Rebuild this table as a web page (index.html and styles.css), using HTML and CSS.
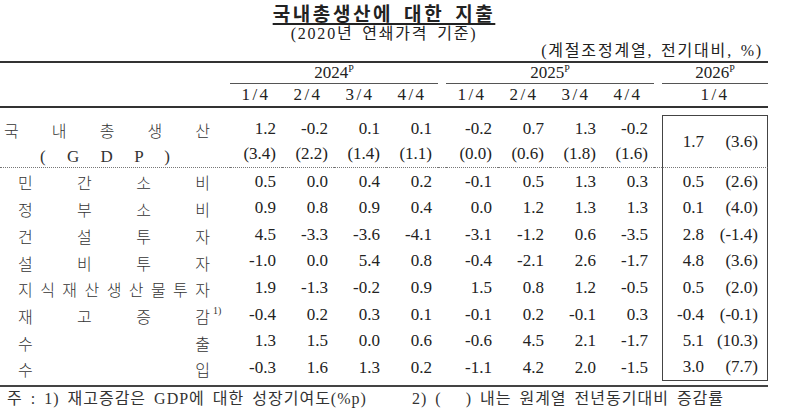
FILE: index.html
```html
<!DOCTYPE html>
<html lang="ko">
<head>
<meta charset="UTF-8">
<title>국내총생산에 대한 지출</title>
<link rel="stylesheet" href="styles.css">
</head>
<body>
<div class="page">
	<div class="title"><span>국내총생산에 대한 지출</span></div>
	<div class="sub">(2020년 연쇄가격 기준)</div>
	<div class="unit">(계절조정계열, 전기대비, %)</div>

	<table class="gdp">
		<colgroup>
			<col class="c-label">
			<col class="c-num"><col class="c-num"><col class="c-num"><col class="c-num">
			<col class="c-gap">
			<col class="c-num"><col class="c-num"><col class="c-num"><col class="c-num">
			<col class="c-gap">
			<col class="c-last1"><col class="c-last2">
		</colgroup>
		<thead>
			<tr class="years">
				<th></th>
				<th colspan="4" class="yr">2024<sup>P</sup></th>
				<th></th>
				<th colspan="4" class="yr">2025<sup>P</sup></th>
				<th></th>
				<th colspan="2" class="yr">2026<sup>P</sup></th>
			</tr>
			<tr class="qtrs">
				<th></th>
				<th>1/4</th><th>2/4</th><th>3/4</th><th>4/4</th>
				<th></th>
				<th>1/4</th><th>2/4</th><th>3/4</th><th>4/4</th>
				<th></th>
				<th colspan="2">1/4</th>
			</tr>
		</thead>
		<tbody>
			<tr class="gap-top"><td colspan="13"></td></tr>
			<tr class="gdp-a">
				<td class="label"><span class="lab lab-wide">국 내 총 생 산</span></td>
				<td>1.2</td><td>-0.2</td><td>0.1</td><td>0.1</td><td></td>
				<td>-0.2</td><td>0.7</td><td>1.3</td><td>-0.2</td><td></td>
				<td rowspan="2" class="bx-l bx-top dot">1.7</td><td rowspan="2" class="bx-r bx-top dot">(3.6)</td>
			</tr>
			<tr class="gdp-b dot-row">
				<td class="label"><span class="lab lab-gdp">( G D P )</span></td>
				<td>(3.4)</td><td>(2.2)</td><td>(1.4)</td><td>(1.1)</td><td></td>
				<td>(0.0)</td><td>(0.6)</td><td>(1.8)</td><td>(1.6)</td><td></td>
			</tr>
			<tr class="first">
				<td class="label"><span class="lab">민 간 소 비</span></td>
				<td>0.5</td><td>0.0</td><td>0.4</td><td>0.2</td><td></td>
				<td>-0.1</td><td>0.5</td><td>1.3</td><td>0.3</td><td></td>
				<td class="bx-l">0.5</td><td class="bx-r">(2.6)</td>
			</tr>
			<tr>
				<td class="label"><span class="lab">정 부 소 비</span></td>
				<td>0.9</td><td>0.8</td><td>0.9</td><td>0.4</td><td></td>
				<td>0.0</td><td>1.2</td><td>1.3</td><td>1.3</td><td></td>
				<td class="bx-l">0.1</td><td class="bx-r">(4.0)</td>
			</tr>
			<tr>
				<td class="label"><span class="lab">건 설 투 자</span></td>
				<td>4.5</td><td>-3.3</td><td>-3.6</td><td>-4.1</td><td></td>
				<td>-3.1</td><td>-1.2</td><td>0.6</td><td>-3.5</td><td></td>
				<td class="bx-l">2.8</td><td class="bx-r">(-1.4)</td>
			</tr>
			<tr>
				<td class="label"><span class="lab">설 비 투 자</span></td>
				<td>-1.0</td><td>0.0</td><td>5.4</td><td>0.8</td><td></td>
				<td>-0.4</td><td>-2.1</td><td>2.6</td><td>-1.7</td><td></td>
				<td class="bx-l">4.8</td><td class="bx-r">(3.6)</td>
			</tr>
			<tr>
				<td class="label"><span class="lab">지 식 재 산 생 산 물 투 자</span></td>
				<td>1.9</td><td>-1.3</td><td>-0.2</td><td>0.9</td><td></td>
				<td>1.5</td><td>0.8</td><td>1.2</td><td>-0.5</td><td></td>
				<td class="bx-l">0.5</td><td class="bx-r">(2.0)</td>
			</tr>
			<tr>
				<td class="label"><span class="lab">재 고 증 감</span><sup class="note">1)</sup></td>
				<td>-0.4</td><td>0.2</td><td>0.3</td><td>0.1</td><td></td>
				<td>-0.1</td><td>0.2</td><td>-0.1</td><td>0.3</td><td></td>
				<td class="bx-l">-0.4</td><td class="bx-r">(-0.1)</td>
			</tr>
			<tr>
				<td class="label"><span class="lab">수 출</span></td>
				<td>1.3</td><td>1.5</td><td>0.0</td><td>0.6</td><td></td>
				<td>-0.6</td><td>4.5</td><td>2.1</td><td>-1.7</td><td></td>
				<td class="bx-l">5.1</td><td class="bx-r">(10.3)</td>
			</tr>
			<tr class="last">
				<td class="label"><span class="lab">수 입</span></td>
				<td>-0.3</td><td>1.6</td><td>1.3</td><td>0.2</td><td></td>
				<td>-1.1</td><td>4.2</td><td>2.0</td><td>-1.5</td><td></td>
				<td class="bx-l bx-bot">3.0</td><td class="bx-r bx-bot">(7.7)</td>
			</tr>
			<tr class="gap-bot"><td colspan="13"></td></tr>
		</tbody>
	</table>

	<div class="foot">
		<span class="foot-1">주 : 1) 재고증감은 GDP에 대한 성장기여도(%p)</span>
		<span class="foot-2">2) (&nbsp;&nbsp;&nbsp;) 내는 원계열 전년동기대비 증감률</span>
	</div>
</div>
</body>
</html>
```

FILE: styles.css
```css
*{
	padding: 0;
	margin: 0;
	box-sizing: border-box;
}
body{
	font-family: "Liberation Serif", "Noto Sans CJK KR", serif;
	color: #222;
	background: #fff;
}
.page{
	width: 768px;
}

.title{
	text-align: center;
	height: 25px;
	font-family: "Noto Sans CJK KR", sans-serif;
	font-weight: 700;
	font-size: 19px;
	line-height: 25px;
}
.title span{
	letter-spacing: 2.6px;
	word-spacing: 3px;
	text-decoration: underline;
	text-decoration-thickness: 2px;
	text-underline-offset: 2px;
}
.sub{
	text-align: center;
	font-size: 16px;
	line-height: 17px;
	letter-spacing: 1.8px;
	word-spacing: 3px;
	height: 17px;
}
.unit{
	text-align: right;
	font-size: 16px;
	line-height: 18px;
	height: 18px;
	letter-spacing: 1.8px;
	word-spacing: 2px;
	padding-right: 5px;
}

.gdp{
	width: 768px;
	border-collapse: separate;
	border-spacing: 0;
	table-layout: fixed;
	border-top: 2px solid #333;
	border-bottom: 2px solid #444;
	font-size: 17px;
	margin-top: 1px;
}
.c-label{ width: 230px; }
.c-num{ width: 52px; }
.c-gap{ width: 8px; }
.c-last1{ width: 48px; }
.c-last2{ width: 58px; }

.gdp th{
	font-weight: normal;
	text-align: center;
	padding: 0;
}
.gdp .years th{
	height: 21px;
	line-height: 20px;
}
.gdp .years th.yr{
	border-bottom: 1px solid #555;
}
.gdp sup{
	font-size: 10px;
	vertical-align: 6px;
	line-height: 0;
}
.gdp .qtrs th{
	height: 23px;
	line-height: 22px;
	letter-spacing: 2.5px;
	border-bottom: 2px solid #333;
}

.gdp td{
	text-align: right;
	padding: 0 6px 0 0;
	height: 26.2px;
	white-space: nowrap;
}
.gdp .gap-top td{ height: 7px; }
.gdp .gap-bot td{ height: 4px; }
.gdp .gdp-a td{ height: 27px; padding-top: 1px; }
.gdp .gdp-b td{ height: 22px; }
.gdp .first td{ height: 27px; padding-top: 1px; }
.gdp .last td{ height: 24.5px; }
.gdp .dot-row td, .gdp td.dot{
	border-bottom: 1px dotted #777;
}

.gdp td.label{
	text-align: left;
	padding: 0;
	font-family: "Noto Sans CJK KR", sans-serif;
	font-weight: 300;
	font-size: 16px;
	color: #333;
}
.lab{
	display: inline-block;
	width: 192px;
	margin-left: 18px;
	text-align: justify;
	text-align-last: justify;
	vertical-align: middle;
}
.lab-wide{
	width: 206px;
	margin-left: 4px;
}
.lab-gdp{
	width: 130px;
	margin-left: 40px;
	font-family: "Liberation Serif", serif;
	font-size: 17px;
}
.note{
	font-family: "Liberation Serif", serif;
	font-size: 11px;
	vertical-align: 6px;
	margin-left: 3px;
}

.gdp td.bx-l{
	border-left: 1.5px solid #444;
	padding-right: 6px;
}
.gdp td.bx-r{
	border-right: 1.5px solid #444;
	padding-right: 9px;
}
.gdp td.bx-top{ border-top: 1.5px solid #444; }
.gdp td.bx-bot{ border-bottom: 1.5px solid #444; }

.foot{
	display: flex;
	font-size: 16px;
	line-height: 20px;
	padding-top: 2px;
	color: #333;
	letter-spacing: 1px;
}
.foot-1{
	width: 412px;
	padding-left: 7px;
	word-spacing: 3px;
}
.foot-2{
	word-spacing: 3px;
}
```
